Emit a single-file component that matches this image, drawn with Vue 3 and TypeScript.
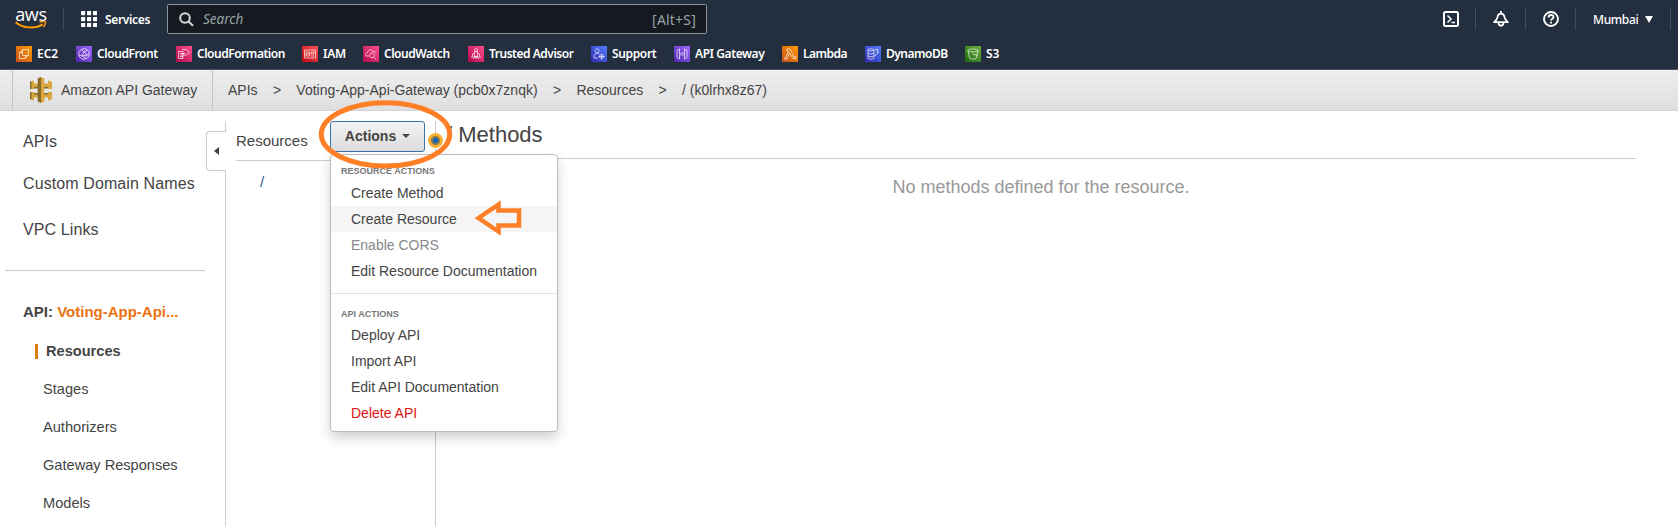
<script setup lang="ts">
interface Fav { name: string; kind: string; tone: string; w: number; ls: number }
const favs: Fav[] = [
  { name: 'EC2', kind: 'ec2', tone: 'orange', w: 60, ls: 0 },
  { name: 'CloudFront', kind: 'cf', tone: 'purple', w: 100, ls: -0.42 },
  { name: 'CloudFormation', kind: 'form', tone: 'pink', w: 126, ls: -0.48 },
  { name: 'IAM', kind: 'iam', tone: 'red', w: 61, ls: -0.3 },
  { name: 'CloudWatch', kind: 'watch', tone: 'pink', w: 105, ls: -0.48 },
  { name: 'Trusted Advisor', kind: 'advisor', tone: 'pink', w: 123, ls: -0.48 },
  { name: 'Support', kind: 'support', tone: 'blue', w: 83, ls: -0.36 },
  { name: 'API Gateway', kind: 'api', tone: 'purple', w: 108, ls: -0.42 },
  { name: 'Lambda', kind: 'lambda', tone: 'orange', w: 83, ls: -0.5 },
  { name: 'DynamoDB', kind: 'dynamo', tone: 'blue', w: 100, ls: -0.5 },
  { name: 'S3', kind: 's3', tone: 'green', w: 50, ls: 0 },
]
const glyphs: Record<string, string> = {
  ec2: 'M6.5 3.5h6v6h-6zM9.5 9.5v3h-6v-6h3M5 6.5V5h1.500M11 9.500V11H9.500',
  cf: 'M8 2.700a5.300 5.300 0 1 0 0 10.600a5.300 5.300 0 1 0 0-10.600M5.500 4l2.500 2 3-1.500M8 6l-2 4-3-1M8 6l3 3 2-1M6 10l3 2 2-3M6 10l5-1',
  form: 'M2.500 5.500h4.500v7H2.500zM4 7.500h5M4 9h5M4 10.500h3M6 3.500h4l3.500 3-3 2.500H9',
  iam: 'M2.500 4h11v8h-11zM4 6h3.500v4H4zM9 6h3v2H9zM9 10h3M4 8h3.500',
  watch: 'M3 10C1.500 7.500 4 6.500 4.500 6.500 5 3.500 9 3 10 5.500c2-.500 3 1 3 2M3 10h3M9 7a2.300 2.300 0 1 0 .1 0M10.700 11l2.300 2',
  advisor: 'M8 2.500a1.500 1.500 0 1 0 .1 0M6.500 5.500h3v5h-3zM6.500 7l-2 1v2.500M9.500 7l2 1v2.500M3 11h10M5 13l2-2M11 13l-2-2M8 10v3',
  support: 'M6 2.800a2 2 0 1 0 .1 0M3 12V9.500C3.500 7 8 7 8.500 8M3 12h4M10.500 8.500a2 2 0 1 0 .1 0M10.500 7.500v6M7.500 10.500h6',
  api: 'M3 4.500l2.500-1.500v10L3 11.500zM13 4.500L10.500 3v10l2.500-1.500zM7.500 6.500L6.500 8l1 1.500M8.500 6.500l1 1.500-1 1.500',
  lambda: 'M5 3h3l4 8 1.500-.500.500 2h-3L7.500 7 5 13H2.500L6.500 6 6 5H5z',
  dynamo: 'M3 4c0-1.500 6-1.500 6 0v8c0 1.500-6 1.500-6 0zM3 4c0 1.300 6 1.300 6 0M3 7c0 1.300 6 1.300 6 0M3 9.700c0 1.300 6 1.300 6 0M10 3.500h3l-1 2.500h1.500L10 10',
  s3: 'M3 4.500c0-2 10-2 10 0s-10 2-10 0l1.500 7.500c.500 1.500 6.500 1.500 7 0L13 4.500M7.500 8l5 1.500',
}
const crumbs: string[] = ['APIs', 'Voting-App-Api-Gateway (pcb0x7znqk)', 'Resources', '/ (k0lrhx8z67)']
const top: string[] = ['APIs', 'Custom Domain Names', 'VPC Links']
const sub: string[] = ['Resources', 'Stages', 'Authorizers', 'Gateway Responses', 'Models']
const groups = [
  { title: 'RESOURCE ACTIONS', items: [
    { t: 'Create Method', c: '' }, { t: 'Create Resource', c: 'hover' },
    { t: 'Enable CORS', c: 'off' }, { t: 'Edit Resource Documentation', c: '' }] },
  { title: 'API ACTIONS', items: [
    { t: 'Deploy API', c: '' }, { t: 'Import API', c: '' },
    { t: 'Edit API Documentation', c: '' }, { t: 'Delete API', c: 'danger' }] },
]
</script>

<template>
  <div class="page">
    <header class="head">
      <div class="row1">
        <div class="logo">
          <span class="aws">aws</span>
          <svg class="smile" width="32" height="9" viewBox="0 0 32 9" fill="none" stroke="#f90">
            <path d="M.6 1.200C8 7.600 20 8 28 3.400" stroke-width="1.900" />
            <path d="M24.500 1.100c3-.800 5.800-.800 6 .1s-.500 3-2 5" stroke-width="1.400" />
          </svg>
        </div>
        <i class="sep"></i>
        <svg class="grid" width="16" height="16" fill="#fff"><template v-for="r in 3" :key="r"><rect v-for="c in 3" :key="c" :x="(c - 1) * 6" :y="(r - 1) * 6" width="4.200" height="4.200" rx=".6" /></template></svg>
        <span class="services">Services</span>
        <div class="search">
          <svg width="15" height="15" fill="none" stroke="#d5dbdb" stroke-width="2"><circle cx="6" cy="6" r="4.800" /><path d="M9.500 9.500l4.500 4.300" /></svg>
          <span class="ph">Search</span><span class="alt">[Alt+S]</span>
        </div>
        <div class="right">
          <svg class="ic" width="16" height="16" fill="none" stroke="#fff" stroke-width="2"><rect x="1" y="1" width="14" height="14" rx="1.500" /><path d="M4.500 4.500L8 8l-3.500 3.500M8.500 11.500H12" stroke-width="1.500" /></svg>
          <i class="sep"></i>
          <svg class="ic" width="16" height="16" fill="none" stroke="#fff" stroke-width="1.800"><path d="M8 0v2M1.200 11.200C4.500 8.500 4.300 7 4.800 5 5.600 1.700 10.400 1.700 11.200 5 11.700 7 11.500 8.500 14.800 11.200zM5.500 11.500c0 4.300 5 4.300 5 0" stroke-linejoin="round" /></svg>
          <i class="sep"></i>
          <svg class="ic" width="16" height="16" fill="none" stroke="#fff" stroke-width="1.900"><circle cx="8" cy="8" r="7" /><path d="M5.600 6.500c0-3.300 4.900-3.100 4.900-.3 0 1.600-2.500 1.500-2.500 3.300M8 10.700v1.800" /></svg>
          <i class="sep"></i>
          <span class="region">Mumbai</span>
          <svg class="caret" width="8" height="7"><path d="M0 0h8L4 7z" fill="#fff" /></svg>
          <i class="sep last"></i>
        </div>
      </div>
      <nav class="favs">
        <div v-for="f in favs" :key="f.name" class="fav" :style="{ width: f.w + 'px' }">
          <svg class="fi" :class="f.tone" width="16" height="16" fill="none" stroke="#fff" stroke-width=".8" stroke-opacity=".85"><path :d="glyphs[f.kind]" /></svg>
          <span class="fn" :style="{ letterSpacing: f.ls + 'px' }">{{ f.name }}</span>
        </div>
      </nav>
    </header>

    <div class="bar">
      <div class="product">
        <svg width="22" height="26">
          <path d="M0 5l3-1.500 1 .5v8H0zM0 15h4v8l-1 .5L0 22zM22 5l-3-1.500-1 .5v8h4zM22 15h-4v8l1 .5 3-1.500zM4 6.500h14V11H4zM4 16h14v4.500H4zM11 0l3.300 1.500v23L11 26z" fill="#d9a741" />
          <path d="M11 0L7.700 1.500v23L11 26zM0 5l1.500-.8V12H0zM0 15h1.500v7.800L0 22zM4 10h3.700v1.500H4zM14.300 10H18v1.500h-3.700zM4 16h3.700v1.500H4zM14.300 16H18v1.500h-3.700z" fill="#876929" />
        </svg>
        <span>Amazon API Gateway</span>
      </div>
      <div class="crumbs">
        <template v-for="(c, i) in crumbs" :key="c"><b v-if="i">&gt;</b><span>{{ c }}</span></template>
      </div>
    </div>

    <main class="main">
      <aside class="side">
        <div v-for="t in top" :key="t" class="t">{{ t }}</div>
        <hr>
        <div class="api">API: <em>Voting-App-Api...</em></div>
        <div v-for="(s, i) in sub" :key="s" class="s" :class="{ on: !i }">{{ s }}</div>
        <div class="collapse"><svg width="5" height="8"><path d="M5 0v8L0 4z" fill="#444" /></svg></div>
      </aside>
      <section class="tree">
        <div class="treehead"><span>Resources</span>
          <button class="btn">Actions<svg width="8" height="4"><path d="M0 0h8L4 4z" fill="#444" /></svg></button>
        </div>
        <div class="root">/</div>
        <div class="menu">
          <div v-for="g in groups" :key="g.title" class="group">
            <div class="gt">{{ g.title }}</div>
            <div v-for="m in g.items" :key="m.t" class="mi" :class="m.c">{{ m.t }}</div>
          </div>
        </div>
        <span class="dot"></span>
      </section>
      <section class="content">
        <h1>/ Methods</h1>
        <p>No methods defined for the resource.</p>
      </section>
    </main>
    <svg class="marks" width="1678" height="526" fill="none" stroke="#ff7f27">
      <ellipse cx="385.500" cy="134.300" rx="64.200" ry="31.600" stroke-width="5" />
      <path d="M478.500 218L498.500 204.500V210.500H519V225.500H498.500V231.500z" stroke-width="4.500" />
    </svg>
  </div>
</template>

<style>
html, body { margin: 0; overflow: hidden; background: #fff; }
</style>
<style scoped>
* { box-sizing: border-box; }
.page { position: relative; width: 1678px; height: 526px; overflow: hidden; font-family: "Liberation Sans", Arial, sans-serif; color: #444; background: #fff; display: flex; flex-direction: column; }
.head { height: 70px; flex: none; background: #232f3e; border-bottom: 1px solid #4c5561; font-family: "Noto Sans", "Open Sans", sans-serif; color: #fff; }
.row1 { height: 38px; display: flex; align-items: center; }
.logo { width: 32px; height: 21px; margin-left: 15px; display: flex; flex-direction: column; align-items: center; }
.aws { font: 500 18px/11px "Open Sans", sans-serif; height: 13px; letter-spacing: -.3px; }
.smile { display: block; flex: none; }
.sep { width: 1px; height: 22px; background: #414d5c; flex: none; }
.logo + .sep { margin-left: 16px; }
.grid { margin-left: 17px; }
.services { margin-left: 8px; width: 62px; font-size: 12px; font-weight: 600; letter-spacing: -.35px; white-space: nowrap; }
.search { width: 540px; height: 30px; border: 1px solid #879596; border-radius: 2px; background: #161920; display: flex; align-items: center; padding: 0 10px 0 11px; color: #95a5a6; font-size: 14px; }
.ph { margin-left: 9px; font-style: italic; font-size: 13.500px; }
.alt { margin-left: auto; font-size: 14px; letter-spacing: .2px; }
.right { margin-left: auto; display: flex; align-items: center; }
.ic { margin-right: 16px; }
.sep + .ic { margin-left: 17px; }
.region { margin-left: 17px; width: 45px; font-size: 12px; font-weight: 500; letter-spacing: -.35px; }
.caret { margin-left: 7px; }
.last { margin-left: 17px; margin-right: 7px; }
.favs { display: flex; padding: 8px 0 0 16px; }
.fav { display: flex; align-items: center; height: 16px; font-size: 12px; font-weight: 600; white-space: nowrap; }
.fn { margin-top: -2px; }
.fi { margin-right: 5px; flex: none; }
.orange { background: linear-gradient(45deg, #c8511b, #f90); }
.purple { background: linear-gradient(45deg, #4d27aa, #a166ff); }
.pink { background: linear-gradient(45deg, #b0084d, #ff4f8b); }
.red { background: linear-gradient(45deg, #bd0816, #ff5252); }
.blue { background: linear-gradient(45deg, #2e27ad, #527fff); }
.green { background: linear-gradient(45deg, #1b660f, #6cae3e); }
.bar { height: 41px; flex: none; display: flex; padding-left: 12px; background: linear-gradient(#eee, #dfdfdf); border-bottom: 1px solid #d3d3d3; font-size: 14px; }
.product { width: 201px; border: 1px solid #c5c5c5; border-width: 0 1px; display: flex; align-items: center; padding-left: 17px; }
.product span { margin: -1px 0 0 9px; }
.crumbs { display: flex; align-items: center; margin: -1px 0 0 15px; }
.crumbs b { font-weight: 400; margin: 0 15.300px; }
.main { flex: 1; display: flex; padding-top: 10px; }
.side { position: relative; width: 226px; border-right: 1px solid #ccc; display: flex; flex-direction: column; }
.t { font-size: 16px; line-height: 20px; letter-spacing: .1px; margin-left: 23px; margin-top: 11px; }
.t:nth-child(2) { margin-top: 22px; }
.t:nth-child(3) { margin-top: 26px; }
.side hr { width: 200px; margin: 30px 0 0 5px; border: 0; height: 1px; background: #ccc; flex: none; }
.api { font-size: 15px; line-height: 20px; font-weight: 700; margin: 31px 0 10px 23px; white-space: nowrap; flex: none; }
.api em { font-style: normal; color: #ec7211; }
.s { height: 38px; flex: none; line-height: 38px; font-size: 14.600px; margin-left: 43px; }
.s.on { font-weight: 700; margin-left: 35px; display: flex; align-items: center; }
.s.on::before { content: ""; width: 3px; height: 15px; background: #e07b10; margin-right: 8px; }
.collapse { position: absolute; left: 206px; top: 10px; width: 20px; height: 40px; border: 1px solid #ccc; border-right: 0; border-radius: 4px 0 0 4px; background: #fff; padding: 15px 0 0 7px; line-height: 0; }
.tree { position: relative; width: 210px; padding-left: 10px; border-right: 1px solid #ccc; }
.treehead { height: 40px; border-bottom: 1px solid #ccc; font-size: 15px; display: flex; }
.treehead span { line-height: 39px; width: 94px; }
.btn { width: 95px; height: 31px; border: 1px solid #3c73a8; border-radius: 3px; background: linear-gradient(#f3f3f3, #dcdcdc); font: 700 14px "Liberation Sans", sans-serif; color: #444; padding: 0 0 1px; display: flex; align-items: center; justify-content: center; gap: 6px; }
.root { margin: 11px 0 0 24px; font-size: 15px; line-height: 20px; color: #2a5f96; }
.menu { position: absolute; z-index: 2; left: 104px; top: 33px; width: 228px; height: 278px; border: 1px solid #bbb; border-radius: 4px; background: #fff; box-shadow: 0 6px 12px rgba(0,0,0,.18); }
.gt { padding: 11px 0 0 10px; height: 25px; font-size: 9px; line-height: 10px; font-weight: 700; color: #777; }
.group { height: 138px; }
.group + .group { border-top: 1px solid #e2e2e2; }
.group + .group .gt { height: 28px; padding-top: 15px; }
.mi { height: 26px; line-height: 26px; padding-left: 20px; font-size: 14px; color: #444; }
.hover { background: #f5f5f5; }
.off { color: #888; }
.danger { color: #d11; }
.dot { position: absolute; left: 202px; top: 12px; width: 15px; height: 15px; border-radius: 50%; background: radial-gradient(circle, #1166bb 0 2.300px, #8a7b50 3px 4.200px, #fbb034 5px); }
.content { width: 1200px; }
h1 { margin: 0; height: 38px; padding-left: 10px; border-bottom: 1px solid #ccc; font-size: 22px; line-height: 28px; font-weight: 400; }
p { margin: 17px 0 0 10px; text-align: center; font-size: 18px; line-height: 22px; color: #999; }
.marks { position: absolute; left: 0; top: 0; z-index: 5; }
</style>
